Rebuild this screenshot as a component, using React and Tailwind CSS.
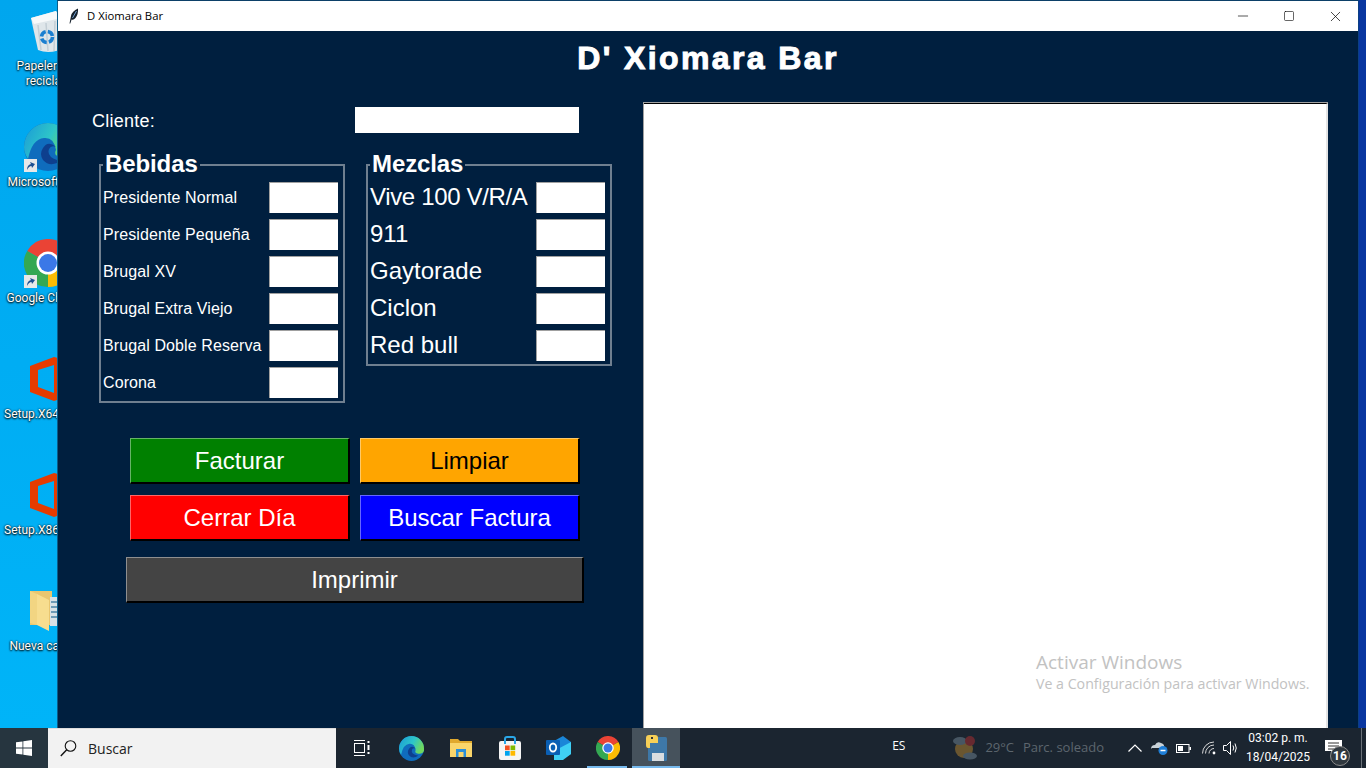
import { Minus, Square, X } from 'lucide-react';

const sans = "font-['Liberation_Sans',Arial,sans-serif]";
const ui = "font-['Open_Sans','Noto_Sans',sans-serif]";
const label = "font-['Roboto','Noto_Sans',sans-serif]";

const bebidas = ['Presidente Normal', 'Presidente Pequeña', 'Brugal XV', 'Brugal Extra Viejo', 'Brugal Doble Reserva', 'Corona'];
const mezclas = ['Vive 100 V/R/A', '911', 'Gaytorade', 'Ciclon', 'Red bull'];

function RecycleIcon() {
  return (
    <svg width="36" height="44" viewBox="0 0 36 44">
      <path d="M1 9 L26 2 L31 11 L29 41 Q18 45 8 41 L2 14 Z" fill="#dfe6ea" />
      <path d="M1 9 L26 2 L31 9 L4 15 Z" fill="#f7f9fa" />
      <path d="M8 16 L11 41 M16 14 L18 42 M25 12 L24 42" stroke="#c3ced5" strokeWidth="1.5" />
      <circle cx="17" cy="28" r="5.5" fill="none" stroke="#1b7fd0" strokeWidth="3.5" strokeDasharray="6.5 2.2" />
    </svg>
  );
}

function EdgeIcon({ size = 48 }) {
  return (
    <svg width={size} height={size} viewBox="0 0 48 48">
      <defs>
        <linearGradient id="edgeTop" x1="0" y1="0" x2="1" y2="0.4">
          <stop offset="0" stopColor="#1a9ad8" />
          <stop offset="0.6" stopColor="#2ec6c8" />
          <stop offset="1" stopColor="#6fd85f" />
        </linearGradient>
      </defs>
      <circle cx="24" cy="24" r="24" fill="#0f6cbd" />
      <path d="M0 24 A24 24 0 0 1 48 24 L48 28 Q46 35 37 34 Q29 33 32 27 Q30 14 20 15 Q8 16 4 36 Q0 30 0 24 Z" fill="url(#edgeTop)" />
      <path d="M19 25 Q24 17 32 24 Q27 22 25 26 Q22 35 37 38 Q26 45 19 37 Q15 31 19 25 Z" fill="#0e3f8e" />
    </svg>
  );
}

function ChromeIcon({ size = 48 }) {
  return (
    <svg width={size} height={size} viewBox="0 0 48 48">
      <path d="M24 24 L3.2 12 A24 24 0 0 1 44.8 12 Z" fill="#ea4335" />
      <path d="M24 24 L44.8 12 A24 24 0 0 1 24 48 Z" fill="#fbbc04" />
      <path d="M24 24 L24 48 A24 24 0 0 1 3.2 12 Z" fill="#34a853" />
      <circle cx="24" cy="24" r="11.5" fill="#fff" />
      <circle cx="24" cy="24" r="9" fill="#3b78e7" />
    </svg>
  );
}

function Shortcut() {
  return (
    <div className="absolute left-0 bottom-[-1px] w-[13px] h-[13px] bg-[#e8e8e8] flex items-center justify-center">
      <svg width="11" height="11" viewBox="0 0 11 11">
        <path d="M2 10 Q2 5 6 4 L5 2 L10 4 L7 8 L6.5 6 Q4 6 2 10 Z" fill="#1d4f91" />
      </svg>
    </div>
  );
}

function OfficeIcon() {
  return (
    <svg width="38" height="44" viewBox="0 0 38 44">
      <path d="M1 9 L25 0 L36 3 L36 40 L25 44 L1 35 Z M9 13 L9 30 L25 36 L25 8 Z" fill="#e63b00" fillRule="evenodd" />
    </svg>
  );
}

function FolderIcon() {
  return (
    <svg width="36" height="44" viewBox="0 0 36 44">
      <path d="M0 2 L22 2 L22 36 L0 36 Z" fill="#e9c66f" />
      <rect x="20" y="8" width="16" height="29" fill="#d8e1e6" />
      <path d="M21 13 h13 M21 18 h13 M21 23 h9 M21 28 h13" stroke="#6d9ab5" strokeWidth="2" />
      <path d="M7 5 L19 11 L19 42 L7 36 Z" fill="#f7dd8f" />
      <path d="M0 2 L7 5 L7 36 L0 34 Z" fill="#f2d582" />
    </svg>
  );
}

function DesktopIcon({ text, children, shortcut }) {
  return (
    <div className="h-[116px] w-[96px] flex flex-col items-center shrink-0">
      <div className="relative w-[48px] h-[48px] flex items-center justify-center">
        {children}
        {shortcut && <Shortcut />}
      </div>
      <div className={`${label} mt-[4px] text-[12px] leading-[15px] text-white text-center w-[88px] whitespace-nowrap [text-shadow:0_1px_2px_#000,0_0_2px_#000]`}>
        {text}
      </div>
    </div>
  );
}

function Desktop() {
  return (
    <div className="w-[57px] shrink-0 overflow-hidden pt-[7px]">
      <DesktopIcon text={<>Papelera de<br />reciclaje</>}><RecycleIcon /></DesktopIcon>
      <DesktopIcon text="Microsoft Edge" shortcut><EdgeIcon /></DesktopIcon>
      <DesktopIcon text="Google Chrome" shortcut><ChromeIcon /></DesktopIcon>
      <DesktopIcon text="Setup.X64.es-ES_"><OfficeIcon /></DesktopIcon>
      <DesktopIcon text="Setup.X86.es-ES_"><OfficeIcon /></DesktopIcon>
      <DesktopIcon text="Nueva carpeta"><FolderIcon /></DesktopIcon>
    </div>
  );
}

function TitleBar() {
  return (
    <div className="h-[30px] bg-white flex items-center shrink-0">
      <svg className="ml-[11px]" width="10" height="16" viewBox="0 0 10 16">
        <path d="M0.5 15.5 L2 8 Q3 3 9 0.5 Q9.5 6 6.5 10 Q4.5 12.5 2.6 11.5 L1.3 15.5 Z" fill="#15202b" />
        <path d="M3.5 10 L7.5 3" stroke="#6f9ccc" strokeWidth="1" />
      </svg>
      <span className={`${ui} ml-[8px] text-[11.3px] text-black`}>D Xiomara Bar</span>
      <div className="ml-auto flex items-center text-black">
        <div className="w-[46px] flex justify-center"><Minus size={16} strokeWidth={1} /></div>
        <div className="w-[46px] flex justify-center"><Square size={12} strokeWidth={1.2} /></div>
        <div className="w-[46px] flex justify-center"><X size={17} strokeWidth={1} /></div>
      </div>
    </div>
  );
}

function Field() {
  return <div className="w-[69px] h-[31px] bg-white border-t border-l border-[#a0a0a0] shrink-0" />;
}

function Group({ title, items, labelClass }) {
  return (
    <div className="relative w-[246px] border-2 border-[#6f7f90] pt-[13px]">
      <span className="absolute left-[2px] top-[-15px] px-[2px] bg-[#001f3f] text-white font-bold text-[24px] leading-[26px] tracking-[-0.1px]">{title}</span>
      {items.map((item) => (
        <div key={item} className="h-[37px] flex items-center pl-[2px] pr-[5px] justify-between">
          <span className={`text-white whitespace-nowrap ${labelClass} ${item === 'Vive 100 V/R/A' ? 'tracking-[-0.35px]' : ''}`}>{item}</span>
          <Field />
        </div>
      ))}
    </div>
  );
}

function ActionButton({ text, color, width = 'w-[220px]', textColor = 'text-white' }) {
  return (
    <button className={`${width} h-[46px] ${color} ${textColor} text-[24px] border border-white/40 border-r-2 border-b-2 border-r-black border-b-black`}>
      {text}
    </button>
  );
}

function AppWindow() {
  return (
    <div className={`${sans} w-[1301px] shrink-0 flex flex-col border-t border-t-[#0c4068] border-l border-l-[#0b5d8a] bg-[#001f3f]`}>
      <TitleBar />
      <h1 className="h-[54px] flex items-center justify-center text-white font-bold text-[32px] tracking-[2.4px] [-webkit-text-stroke:1px_white]">D' Xiomara Bar</h1>
      <div className="flex flex-1 min-h-0 pt-[17px]">
        <div className="w-[585px] shrink-0 flex flex-col">
          <div className="flex items-center h-[26px] mt-[5px]">
            <span className="ml-[34px] w-[263px] text-white text-[18px] tracking-[0.25px] pt-[2px]">Cliente:</span>
            <div className="w-[224px] h-[26px] bg-white" />
          </div>
          <div className="flex items-start gap-[21px] ml-[41px] mt-[31px]">
            <Group title="Bebidas" items={bebidas} labelClass="text-[16px] tracking-[0.1px]" />
            <Group title="Mezclas" items={mezclas} labelClass="text-[24px] pb-[2px]" />
          </div>
          <div className="ml-[72px] mt-[35px] grid grid-cols-[220px_220px] gap-x-[10px] gap-y-[11px] w-[450px]">
            <ActionButton text="Facturar" color="bg-[#008000]" />
            <ActionButton text="Limpiar" color="bg-[#ffa500]" textColor="text-black" />
            <ActionButton text="Cerrar Día" color="bg-[#ff0000]" />
            <ActionButton text="Buscar Factura" color="bg-[#0000ff]" />
          </div>
          <div className="ml-[68px] mt-[16px]">
            <ActionButton text="Imprimir" color="bg-[#444444]" width="w-[458px]" />
          </div>
        </div>
        <div className="w-[685px] border-t border-l border-[#a0a0a0]">
          <div className="relative h-full bg-white border-t border-t-black border-r-2 border-r-[#e4e4e4]">
            <div className={`${ui} absolute left-[392px] top-[546px] text-[#c2c2c2] whitespace-nowrap`}>
              <div className="text-[19px] leading-[24px]">Activar Windows</div>
              <div className="text-[14.2px] leading-[20px]">Ve a Configuración para activar Windows.</div>
            </div>
          </div>
        </div>
      </div>
    </div>
  );
}

function TaskIcon({ children, active, underline }) {
  return (
    <div className={`relative h-[40px] flex items-center justify-center shrink-0 ${active ? 'w-[48px] bg-[#46525c]' : 'w-[49px]'}`}>
      {children}
      {underline && <div className={`absolute bottom-0 h-[2px] bg-[#76b9ed] ${active ? 'left-0 right-0' : 'left-[4px] right-[5px]'}`} />}
    </div>
  );
}

function Taskbar() {
  return (
    <div className={`${ui} h-[40px] shrink-0 flex items-center bg-[#1b2530] text-white`}>
      <div className="w-[48px] h-[40px] flex items-center justify-center bg-[#26353f]">
        <svg width="16" height="16" viewBox="0 0 16 16" fill="#fff">
          <path d="M0 2.3 L6.5 1.4 V7.5 H0 Z M7.3 1.3 L16 0 V7.5 H7.3 Z M0 8.4 H6.5 V14.6 L0 13.7 Z M7.3 8.4 H16 V16 L7.3 14.7 Z" />
        </svg>
      </div>
      <div className="w-[288px] h-[40px] bg-[#f2f2f2] flex items-center border-t border-[#ddd]">
        <svg width="17" height="17" viewBox="0 0 17 17" fill="none" stroke="#111" strokeWidth="1.1" className="ml-[12px]">
          <circle cx="10.5" cy="6" r="5.3" />
          <path d="M6.7 9.8 L0.8 16" strokeWidth="1.4" />
        </svg>
        <span className="ml-[11px] text-[14px] text-[#222]">Buscar</span>
      </div>
      <div className="w-[51px] flex justify-center">
        <svg width="18" height="16" viewBox="0 0 18 16" fill="none" stroke="#fff" strokeWidth="1">
          <path d="M1 0.5 H12 M1 15.5 H12" />
          <rect x="1.5" y="3.5" width="10" height="9" />
          <path d="M15.5 1 V3 M15.5 5 V10 M15.5 12 V14" strokeWidth="2" />
        </svg>
      </div>
      <TaskIcon><EdgeIcon size={25} /></TaskIcon>
      <TaskIcon>
        <svg width="22" height="20" viewBox="0 0 22 20">
          <path d="M0 1 H8 L10 3 H22 V19 H0 Z" fill="#e0a92e" />
          <rect x="0" y="5" width="22" height="14" fill="#f9d56b" />
          <path d="M6 19 V11 H16 V19 H13.5 V14 H8.5 V19 Z" fill="#2a8fd8" />
        </svg>
      </TaskIcon>
      <TaskIcon>
        <svg width="24" height="24" viewBox="0 0 24 24">
          <rect x="1" y="5" width="22" height="19" rx="2" fill="#f5f5f5" />
          <path d="M7 8 V3 Q7 1 9 1 H15 Q17 1 17 3 V8" fill="none" stroke="#2aa7e8" strokeWidth="2" />
          <rect x="7" y="9.5" width="4.7" height="4.7" fill="#f25022" />
          <rect x="12.5" y="9.5" width="4.7" height="4.7" fill="#7fba00" />
          <rect x="7" y="15" width="4.7" height="4.7" fill="#00a4ef" />
          <rect x="12.5" y="15" width="4.7" height="4.7" fill="#ffb900" />
        </svg>
      </TaskIcon>
      <TaskIcon>
        <svg width="25" height="24" viewBox="0 0 25 24">
          <path d="M8 5 L17 0 L25 6 V18 L15 24 H8 Z" fill="#1a86d8" />
          <path d="M8 15 L25 6 V18 L17 24 H8 Z" fill="#3fd0f5" />
          <rect x="0" y="4" width="14" height="15" rx="1" fill="#0a5fb4" />
          <ellipse cx="7" cy="11.5" rx="3.2" ry="4" fill="none" stroke="#fff" strokeWidth="1.8" />
        </svg>
      </TaskIcon>
      <TaskIcon underline><ChromeIcon size={24} /></TaskIcon>
      <TaskIcon active underline>
        <svg width="22" height="26" viewBox="0 0 22 26">
          <rect x="3" y="2" width="19" height="24" rx="1.5" fill="#3e78a8" />
          <path d="M1 3 Q1 0 4 0 H10 Q13 0 13 3 V8 H5 V13 H3 Q1 13 1 10 Z" fill="#f6cf57" />
          <rect x="6" y="2" width="2" height="2" fill="#333" />
          <rect x="7" y="18" width="12" height="8" fill="#d9dde0" />
        </svg>
      </TaskIcon>
      <div className="ml-auto flex items-center h-[40px]">
        <span className="text-[12px] mr-[48px] pb-[5px]">ES</span>
        <svg width="24" height="26" viewBox="0 0 24 26" className="opacity-40 mr-[8px]">
          <circle cx="11" cy="14" r="9" fill="#e0a030" />
          <ellipse cx="7" cy="6" rx="7" ry="4" fill="#8aa0b0" />
          <ellipse cx="17" cy="21" rx="7" ry="3.5" fill="#8aa0b0" />
          <circle cx="17" cy="6" r="5" fill="#d83030" />
        </svg>
        <span className="text-[13px] text-[#5d666e] whitespace-nowrap mr-[9px]">29°C</span>
        <span className="text-[13px] text-[#5d666e] whitespace-nowrap mr-[24px]">Parc. soleado</span>
        <svg width="14" height="8" viewBox="0 0 14 8" fill="none" stroke="#fff" strokeWidth="1.2" className="mr-[9px]">
          <path d="M0.5 7.5 L7 1 L13.5 7.5" />
        </svg>
        <svg width="17" height="14" viewBox="0 0 17 14" className="mr-[8px]">
          <path d="M0 8 Q0 4 4 4 Q6 0 10 2 Q14 3 13 7 H1 Z" fill="#c9d2d8" />
          <circle cx="12" cy="9.5" r="4.5" fill="#1f7fd8" />
          <path d="M9.5 9.5 H14.5" stroke="#fff" strokeWidth="1.5" />
        </svg>
        <svg width="15" height="9" viewBox="0 0 15 9" className="mr-[11px]">
          <rect x="0.5" y="0.5" width="12.5" height="8" fill="none" stroke="#fff" />
          <rect x="2" y="2" width="5" height="5" fill="#fff" />
          <rect x="13.5" y="3" width="1.5" height="3" fill="#fff" />
        </svg>
        <svg width="14" height="14" viewBox="0 0 14 14" fill="none" stroke="#d8d8d8" strokeWidth="1" className="mr-[7px]">
          <path d="M7 12.5 A5 5 0 0 1 12 7.5 M3.5 12.5 A8.5 8.5 0 0 1 12 4 M0.5 12.5 A11.5 11.5 0 0 1 12 1" />
          <circle cx="12" cy="12" r="1.4" fill="#fff" stroke="none" />
        </svg>
        <svg width="16" height="16" viewBox="0 0 16 16" fill="none" stroke="#fff" strokeWidth="1" className="mr-[7px]">
          <path d="M0.5 5.5 H3.5 L7.5 1.5 V14.5 L3.5 10.5 H0.5 Z" />
          <path d="M10 5.5 Q11.5 8 10 10.5 M12 3.5 Q14.5 8 12 12.5" />
        </svg>
        <div className={`${label} text-[12px] leading-[19px] text-center w-[64px] whitespace-nowrap mr-[15px]`}>
          <div>03:02 p. m.</div>
          <div>18/04/2025</div>
        </div>
        <div className="relative w-[36px] h-[40px]">
          <svg width="17" height="14" viewBox="0 0 17 14" className="absolute left-0 top-[12px]">
            <path d="M0 0 H17 V11 H9 L6 14 V11 H0 Z" fill="#fff" />
            <path d="M3 3 H14 M3 6 H14 M3 9 H14" stroke="#333" />
          </svg>
          <div className={`${label} absolute left-[5px] top-[18px] w-[20px] h-[20px] rounded-full border border-[#8a8a8a] bg-[#30383f] text-[12px] leading-[18px] font-bold text-center`}>16</div>
        </div>
        <div className="w-[1px] h-[40px] bg-[#6a7178]" />
        <div className="w-[4px]" />
      </div>
    </div>
  );
}

export default function App() {
  return (
    <div className="w-[1366px] h-[768px] overflow-hidden flex flex-col bg-[#00adf5]">
      <div className="flex flex-1 min-h-0 bg-gradient-to-b from-[#00a6ee] to-[#00b4f8]">
        <Desktop />
        <AppWindow />
        <div className="flex-1 bg-[#0936a0] border-l border-[#0b3f84]" />
      </div>
      <Taskbar />
    </div>
  );
}
